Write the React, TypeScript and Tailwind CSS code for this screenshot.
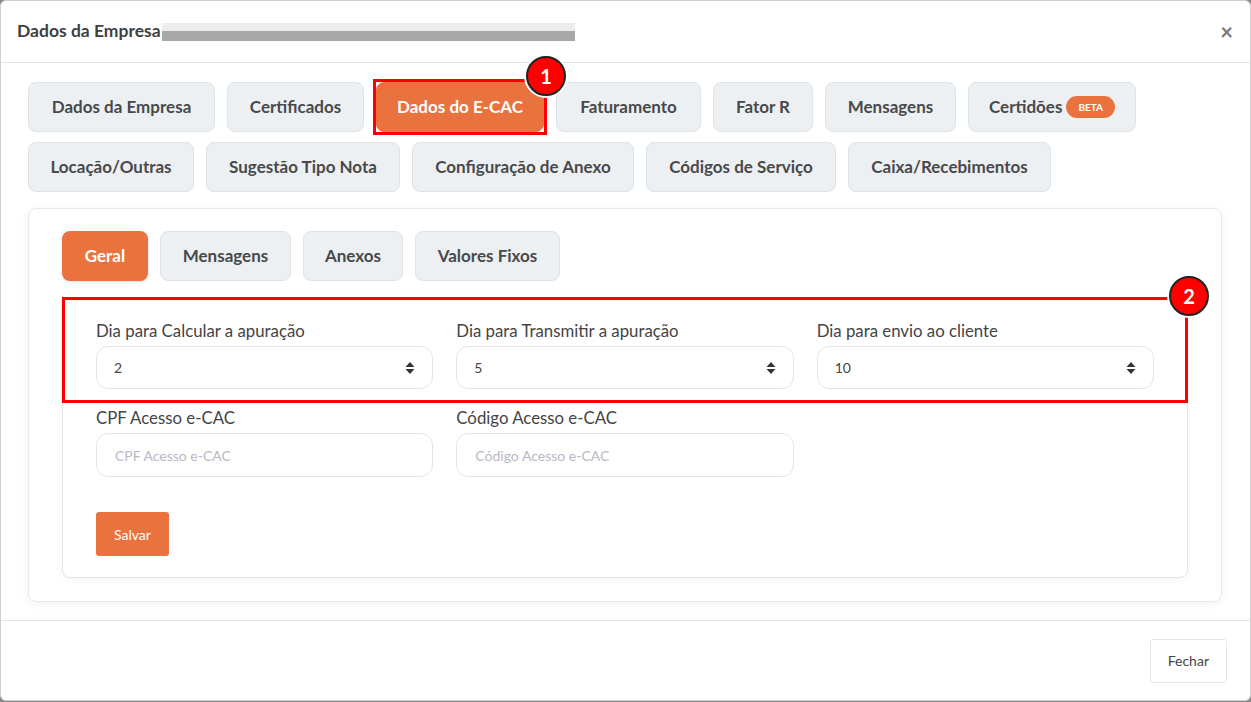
import React from "react";

const font = { fontFamily: '"Lato", "Open Sans", sans-serif' };

const topTabs: [string, string][][] = [
  [
    ["Dados da Empresa", "w-[187px]"],
    ["Certificados", "w-[137px]"],
    ["Dados do E-CAC", "w-[168px]"],
    ["Faturamento", "w-[145px]"],
    ["Fator R", "w-[100px]"],
    ["Mensagens", "w-[131px]"],
    ["Certidões", "w-[168px]"],
  ],
  [
    ["Locação/Outras", "w-[166px]"],
    ["Sugestão Tipo Nota", "w-[194px]"],
    ["Configuração de Anexo", "w-[222px]"],
    ["Códigos de Serviço", "w-[190px]"],
    ["Caixa/Recebimentos", "w-[203px]"],
  ],
];

const subTabs: [string, string][] = [
  ["Mensagens", "w-[131px]"],
  ["Anexos", "w-[100px]"],
  ["Valores Fixos", "w-[145px]"],
];

function Badge({ n }: { n: string }) {
  return (
    <div className="absolute w-[40px] h-[40px] rounded-full bg-[#ff0000] border-2 border-[#222] ring-2 ring-white flex items-center justify-center text-white font-bold text-[20px]">
      {n}
    </div>
  );
}

function TabButton({ label, width, active }: { label: string; width: string; active?: boolean }) {
  return (
    <div
      className={
        "h-[50px] flex items-center justify-center rounded-lg border text-[17px] font-bold " +
        width +
        " " +
        (active
          ? "bg-[#ea723f] border-[#ea723f] text-white"
          : "bg-[#edf0f2] border-[#dfe4e8] text-[#48494b]")
      }
    >
      {label}
      {label === "Certidões" && (
        <span className="ml-[4px] bg-[#ea723f] text-white text-[10px] font-bold rounded-full px-[12px] py-[6px] leading-none">
          BETA
        </span>
      )}
    </div>
  );
}

function SelectBox({ value }: { value: string }) {
  return (
    <div className="h-[43px] border border-[#e1e6ea] rounded-xl flex items-center justify-between pl-[17px] pr-[17px] text-[14px] text-[#444]">
      <span>{value}</span>
      <svg width="10" height="14" viewBox="0 0 10 14">
        <path d="M5 1 L9.5 6 H0.5 Z" fill="#333" />
        <path d="M5 13 L9.5 8 H0.5 Z" fill="#333" />
      </svg>
    </div>
  );
}

export default function App() {
  return (
    <div style={font} className="w-[1251px] h-[702px] bg-[#888] overflow-hidden">
      <div className="w-[1251px] h-[701px] bg-white border border-[#cfcfcf] rounded-md flex flex-col">
        <div className="h-[62px] shrink-0 flex items-center justify-between pl-[16px] pr-[17px] border-b border-[#e4e4e4]">
          <div className="flex items-center">
            <span className="text-[17.5px] font-bold text-[#3f3f3f]">Dados da Empresa</span>
            <div className="flex flex-col ml-[1px]">
              <div className="w-[413px] h-[8px] bg-[#ececec]" />
              <div className="w-[413px] h-[10px] bg-[#a8a8a8]" />
            </div>
          </div>
          <span className="text-[#777] text-[22px] font-bold leading-none">×</span>
        </div>

        <div className="flex-1 pl-[27px] pr-[28px] pt-[19px]">
          <div className="flex flex-col gap-[10px]">
            {topTabs.map((row, i) => (
              <div key={i} className="flex gap-[12px]">
                {row.map(([t, w]) =>
                  t === "Dados do E-CAC" ? (
                    <div key={t} className="relative">
                      <TabButton label={t} width={w} active />
                      <div className="absolute -inset-[3px] border-[3px] border-[#ff0000] pointer-events-none" />
                      <div className="absolute -top-[26px] -right-[22px]">
                        <div className="relative w-[40px] h-[40px]">
                          <Badge n="1" />
                        </div>
                      </div>
                    </div>
                  ) : (
                    <TabButton key={t} label={t} width={w} />
                  )
                )}
              </div>
            ))}
          </div>

          <div className="mt-[16px] border border-[#e6e9ec] rounded-lg shadow-[0_2px_10px_rgba(0,0,0,0.06)] px-[33px] pt-[22px] pb-[23px]">
            <div className="flex gap-[12px]">
              <div className="h-[50px] w-[86px] flex items-center justify-center rounded-lg bg-[#ea723f] text-white text-[17px] font-bold shadow-sm">
                Geral
              </div>
              {subTabs.map(([t, w]) => (
                <TabButton key={t} label={t} width={w} />
              ))}
            </div>

            <div className="relative mt-[16px] border border-[#e1e6ea] rounded-lg shadow-[0_2px_8px_rgba(0,0,0,0.04)] px-[33px] pt-[23px] pb-[21px]">
              <div className="absolute -left-[1px] -right-[1px] -top-[1px] h-[106px] border-[3px] border-[#ff0000] pointer-events-none" />
              <div className="absolute -top-[22px] -right-[22px]">
                <div className="relative w-[40px] h-[40px]">
                  <Badge n="2" />
                </div>
              </div>

              <div className="grid grid-cols-3 gap-x-[23px]">
                {[
                  ["Dia para Calcular a apuração", "2"],
                  ["Dia para Transmitir a apuração", "5"],
                  ["Dia para envio ao cliente", "10"],
                ].map(([l, v]) => (
                  <div key={l} className="flex flex-col">
                    <label className="text-[16.8px] text-[#444] leading-[20px] mb-[5px]">{l}</label>
                    <SelectBox value={v} />
                  </div>
                ))}
                {["CPF Acesso e-CAC", "Código Acesso e-CAC"].map((l) => (
                  <div key={l} className="flex flex-col mt-[19px]">
                    <label className="text-[16.8px] text-[#444] leading-[20px] mb-[5px]">{l}</label>
                    <div className="h-[44px] border border-[#e1e6ea] rounded-xl flex items-center pl-[18px] text-[14px] text-[#b7b8c6]">
                      {l}
                    </div>
                  </div>
                ))}
              </div>

              <div className="mt-[35px]">
                <button className="h-[44px] px-[18px] bg-[#ea723f] text-white text-[14px] rounded-[3px]">
                  Salvar
                </button>
              </div>
            </div>
          </div>
        </div>

        <div className="h-[80px] shrink-0 border-t border-[#e4e4e4] flex items-center justify-end pr-[23px]">
          <button className="h-[44px] px-[17px] border border-[#e4e4e4] rounded-[3px] bg-white text-[14px] text-[#444]">
            Fechar
          </button>
        </div>
      </div>
    </div>
  );
}
